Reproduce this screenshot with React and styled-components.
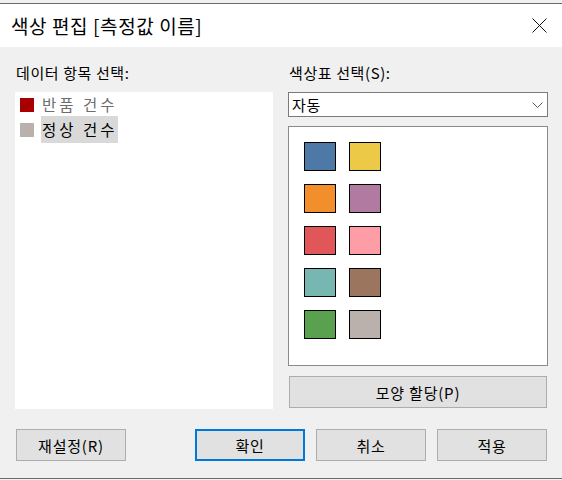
import React from 'react';
import styled, { createGlobalStyle } from 'styled-components';

const GlobalStyle = createGlobalStyle`
  html, body {
    margin: 0;
    background: #f0f0f0;
    font-family: 'Noto Sans CJK KR', 'Noto Sans', sans-serif;
  }
`;

const items = [
  { name: '반품 건수', color: '#a80000', selected: false },
  { name: '정상 건수', color: '#bab0ac', selected: true },
];

const palette = [
  '#4e79a7', '#edc948',
  '#f28e2b', '#b07aa1',
  '#e15759', '#ff9da7',
  '#76b7b2', '#9c755f',
  '#59a14f', '#bab0ac',
];

function App() {
  return (
    <>
      <GlobalStyle />
      <Frame>
        <TitleBar>
          <Title>색상 편집 [측정값 이름]</Title>
          <CloseButton>
            <svg width='15' height='15' viewBox='0 0 15 15'>
              <path d='M0.5 0.5 L14.5 14.5 M14.5 0.5 L0.5 14.5' stroke='#111' strokeWidth='1' fill='none' />
            </svg>
          </CloseButton>
        </TitleBar>
        <Body>
          <Columns>
            <Column>
              <Label>데이터 항목 선택:</Label>
              <ListBox>
                {items.map((item) => (
                  <Item key={item.name}>
                    <Square $color={item.color} />
                    <ItemText $selected={item.selected}>{item.name}</ItemText>
                  </Item>
                ))}
              </ListBox>
            </Column>
            <Column>
              <Label>색상표 선택(S):</Label>
              <Select>
                <span>자동</span>
                <svg width='11' height='6' viewBox='0 0 11 6'>
                  <path d='M0.5 0.5 L5.5 5.5 L10.5 0.5' stroke='#555' strokeWidth='1' fill='none' />
                </svg>
              </Select>
              <Palette>
                {palette.map((c, i) => (
                  <Swatch key={i} $color={c} />
                ))}
              </Palette>
              <AssignButton>모양 할당(P)</AssignButton>
            </Column>
          </Columns>
          <ButtonRow>
            <Button>재설정(R)</Button>
            <ButtonGroup>
              <Button $primary>확인</Button>
              <Button>취소</Button>
              <Button>적용</Button>
            </ButtonGroup>
          </ButtonRow>
        </Body>
      </Frame>
    </>
  );
}

export default App;

// STYLED COMPONENTS
const Frame = styled.div`
  margin-top: 3px;
  height: 476px;
  box-sizing: border-box;
  border-top: 1px solid #6b6b6b;
  border-bottom: 1px solid #6b6b6b;
  display: flex;
  flex-direction: column;
  background: #f0f0f0;
`;

const TitleBar = styled.div`
  height: 43px;
  flex-shrink: 0;
  background: #fff;
  display: flex;
  align-items: center;
  justify-content: space-between;
  padding: 0 15px 0 11px;
`;

const Title = styled.div`
  font-size: 19px;
  letter-spacing: 0.6px;
  color: #000;
`;

const CloseButton = styled.div`
  width: 15px;
  height: 15px;
  display: flex;
`;

const Body = styled.div`
  padding: 15px 14px 0 15px;
  display: flex;
  flex-direction: column;
`;

const Columns = styled.div`
  display: grid;
  grid-template-columns: 258px 260px;
  column-gap: 15px;
`;

const Column = styled.div`
  display: flex;
  flex-direction: column;
`;

const Label = styled.div`
  height: 22px;
  line-height: 22px;
  font-size: 15px;
  letter-spacing: 0.6px;
  color: #000;
  padding-left: 1px;
  margin-bottom: 8px;
`;

const ListBox = styled.div`
  height: 317px;
  background: #fff;
  padding-left: 5px;
  box-sizing: border-box;
`;

const Item = styled.div`
  height: 25px;
  display: flex;
  align-items: center;
  gap: 7px;
`;

const Square = styled.div`
  width: 14px;
  height: 14px;
  background: ${(p) => p.$color};
`;

const ItemText = styled.span`
  font-size: 15.5px;
  letter-spacing: 3px;
  height: 27px;
  line-height: 27px;
  padding: 0 0 0 1px;
  color: ${(p) => (p.$selected ? '#000' : '#6d6d6d')};
  background: ${(p) => (p.$selected ? '#d9d9d9' : 'transparent')};
`;

const Select = styled.div`
  height: 25px;
  box-sizing: border-box;
  border: 1px solid #7a7a7a;
  background: #fff;
  display: flex;
  align-items: center;
  justify-content: space-between;
  padding: 0 4px 0 3px;
  font-size: 15px;
  letter-spacing: 0.6px;
  color: #000;
`;

const Palette = styled.div`
  margin-top: 9px;
  height: 240px;
  box-sizing: border-box;
  border: 1px solid #8a8a8f;
  background: #fff;
  padding: 15px;
  display: grid;
  grid-template-columns: repeat(2, 32px);
  grid-auto-rows: 29px;
  column-gap: 13px;
  row-gap: 13px;
  align-content: start;
`;

const Swatch = styled.div`
  box-sizing: border-box;
  border: 1px solid #000;
  background: ${(p) => p.$color};
`;

const Button = styled.button`
  width: 110px;
  height: 32px;
  box-sizing: border-box;
  background: #e1e1e1;
  border: ${(p) => (p.$primary ? '2px solid #0078d7' : '1px solid #adadad')};
  font-family: 'Noto Sans CJK KR', 'Noto Sans', sans-serif;
  font-size: 15px;
  letter-spacing: 0.8px;
  color: #000;
  padding: 0;
  margin: 0;
`;

const AssignButton = styled(Button)`
  width: auto;
  margin: 10px 1px 0;
`;

const ButtonRow = styled.div`
  margin-top: 20px;
  display: flex;
  justify-content: space-between;
  padding: 0 1px;
`;

const ButtonGroup = styled.div`
  display: flex;
  gap: 11px;
`;
